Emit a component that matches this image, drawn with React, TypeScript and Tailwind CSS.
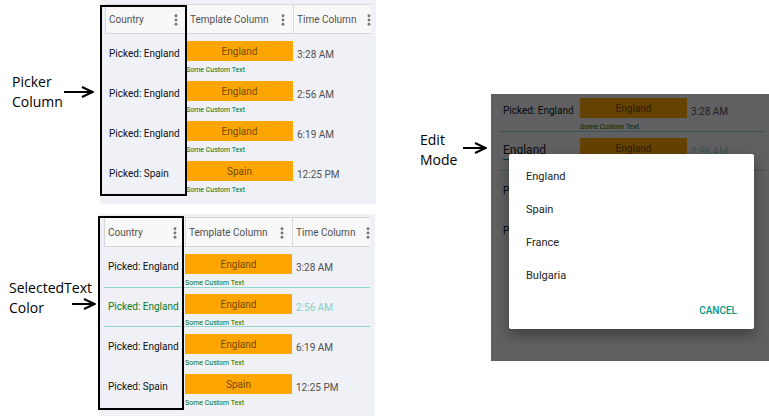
type Row = { country: string; time: string };

const rows: Row[] = [
  { country: 'England', time: '3:28 AM' },
  { country: 'England', time: '2:56 AM' },
  { country: 'England', time: '6:19 AM' },
  { country: 'Spain', time: '12:25 PM' },
];

const countries = ['England', 'Spain', 'France', 'Bulgaria'];

function Dots() {
  return (
    <svg viewBox="0 0 4 12" className="block h-3 w-1 fill-[#777]" aria-hidden="true">
      <circle cx="2" cy="1.7" r="1.45" />
      <circle cx="2" cy="6" r="1.45" />
      <circle cx="2" cy="10.300" r="1.45" />
    </svg>
  );
}

function Arrow({ length }: { length: 'long' | 'short' }) {
  const long = length === 'long';
  return (
    <svg
      viewBox={long ? '0 0 30 12' : '0 0 24 12'}
      className={long ? 'h-3 w-[30px] shrink-0' : 'h-3 w-6 shrink-0'}
      fill="none"
      stroke="black"
      strokeWidth="2"
      aria-hidden="true"
    >
      {long ? <path d="M0 6H28M18 1L28.500 6L18 11" /> : <path d="M0 6H22M12 1L22.500 6L12 11" />}
    </svg>
  );
}

function HeaderCell({ title, last }: { title: string; last?: boolean }) {
  return (
    <th className="h-[30px] border-y border-l border-[#d8d8d8] bg-[#f8f8f8] p-0 font-normal">
      <div className={last ? 'flex items-center justify-between pt-px pl-[3px]' : 'flex items-center justify-between pt-px pr-2 pl-[3px]'}>
        <span className="whitespace-nowrap">{title}</span>
        <button type="button" aria-label={`${title} options`}>
          <Dots />
        </button>
      </div>
    </th>
  );
}

function Grid({ selected, editing, header = true }: { selected?: number; editing?: boolean; header?: boolean }) {
  return (
    <table className="w-full table-fixed border-separate border-spacing-0 text-left font-[Roboto,sans-serif] text-[10px] leading-4 text-[#505050]">
      <colgroup>
        <col className="w-[81px]" />
        <col className="w-[107px]" />
        <col />
      </colgroup>
      {header && (
        <thead>
          <tr>
            <HeaderCell title="Country" />
            <HeaderCell title="Template Column" />
            <HeaderCell title="Time Column" last />
          </tr>
        </thead>
      )}
      <tbody>
        {rows.map((row, i) => {
          const active = i === selected;
          const edge = active ? 'border-[#93d8cc]' : 'border-transparent';
          return (
            <tr key={row.time} className="h-10">
              <td className={`border-y p-0 pl-1 align-top whitespace-nowrap ${edge}`}>
                {active && editing ? (
                  <select
                    aria-label="Country"
                    defaultValue={row.country}
                    className="mt-2 block h-5 w-[72px] appearance-none border-b border-[#009688] text-[12px] text-[#222]"
                  >
                    {countries.map((c) => (
                      <option key={c}>{c}</option>
                    ))}
                  </select>
                ) : (
                  <div className={active ? 'pt-[11px] text-[#0b7a1c]' : 'pt-[11px] text-[#111]'}>
                    Picked: {row.country}
                  </div>
                )}
              </td>
              <td className={`border-y p-0 pt-[6px] align-top ${edge}`}>
                <div className="h-5 bg-[#ffa500] text-center leading-[22px] text-[#734a00]">{row.country}</div>
                <div className="h-3 pt-[5px] text-[7px] leading-[8px] text-[#007000]">Some Custom Text</div>
              </td>
              <td className={`border-y p-0 pt-3 pl-1 align-top ${edge} ${active ? 'text-[#8bcfc6]' : ''}`}>
                {row.time}
              </td>
            </tr>
          );
        })}
      </tbody>
    </table>
  );
}

export default function App() {
  return (
    <main className="flex items-start bg-white font-['Open_Sans',sans-serif] text-[14px] leading-5 text-black">
      <div className="flex w-[376px] shrink-0 flex-col gap-[10px]">
        <section className="flex items-start">
          <div className="flex w-[100px] items-center pt-[72px] pl-3">
            <h2 className="w-[52px]">Picker Column</h2>
            <Arrow length="long" />
          </div>
          <div className="relative flex-1 bg-[#f0f1f6] px-[5px] pt-1 pb-[10px]">
            <Grid />
            <div className="pointer-events-none absolute top-[5px] left-0 h-[191px] w-[87px] border-2 border-black" />
          </div>
        </section>
        <section className="flex items-start pr-px">
          <div className="flex w-[99px] flex-col pt-[64px] pl-[9px]">
            <h2>SelectedText</h2>
            <div className="flex items-start justify-between pr-[3px]">
              <h2>Color</h2>
              <Arrow length="short" />
            </div>
          </div>
          <div className="relative flex-1 bg-[#f0f1f6] px-[5px] pt-[3px] pb-[9px]">
            <Grid selected={1} />
            <div className="pointer-events-none absolute top-[2px] -left-px h-[194px] w-[86px] border-2 border-black" />
          </div>
        </section>
      </div>

      <section className="flex flex-1 items-start pt-[94px]">
        <div className="flex w-[115px] shrink-0 items-start justify-end pt-9 pr-1">
          <h2 className="w-[43px]">Edit Mode</h2>
          <div className="flex pt-3">
            <Arrow length="short" />
          </div>
        </div>
        <div className="relative h-[267px] flex-1 overflow-hidden bg-[#f0f1f6] pr-1 pl-2">
          <div className="-mt-[3px]">
            <Grid selected={1} editing header={false} />
          </div>
          <div className="absolute inset-0 bg-black/60 pt-[60px] pr-[15px] pl-[18px]">
            <div
              role="dialog"
              aria-label="Choose a country"
              className="rounded-[2px] bg-white pt-[6px] pb-2 font-[Roboto,sans-serif] text-[11px] text-[#222] shadow-[0_6px_14px_rgba(0,0,0,0.35)]"
            >
              <ul>
                {countries.map((c) => (
                  <li key={c}>
                    <button type="button" className="block h-[33px] w-full px-[17px] text-left">
                      {c}
                    </button>
                  </li>
                ))}
              </ul>
              <div className="flex justify-end pt-[9px] pr-[17px]">
                <button type="button" className="text-[10px] font-medium text-[#009688]">
                  CANCEL
                </button>
              </div>
            </div>
          </div>
        </div>
      </section>
    </main>
  );
}
